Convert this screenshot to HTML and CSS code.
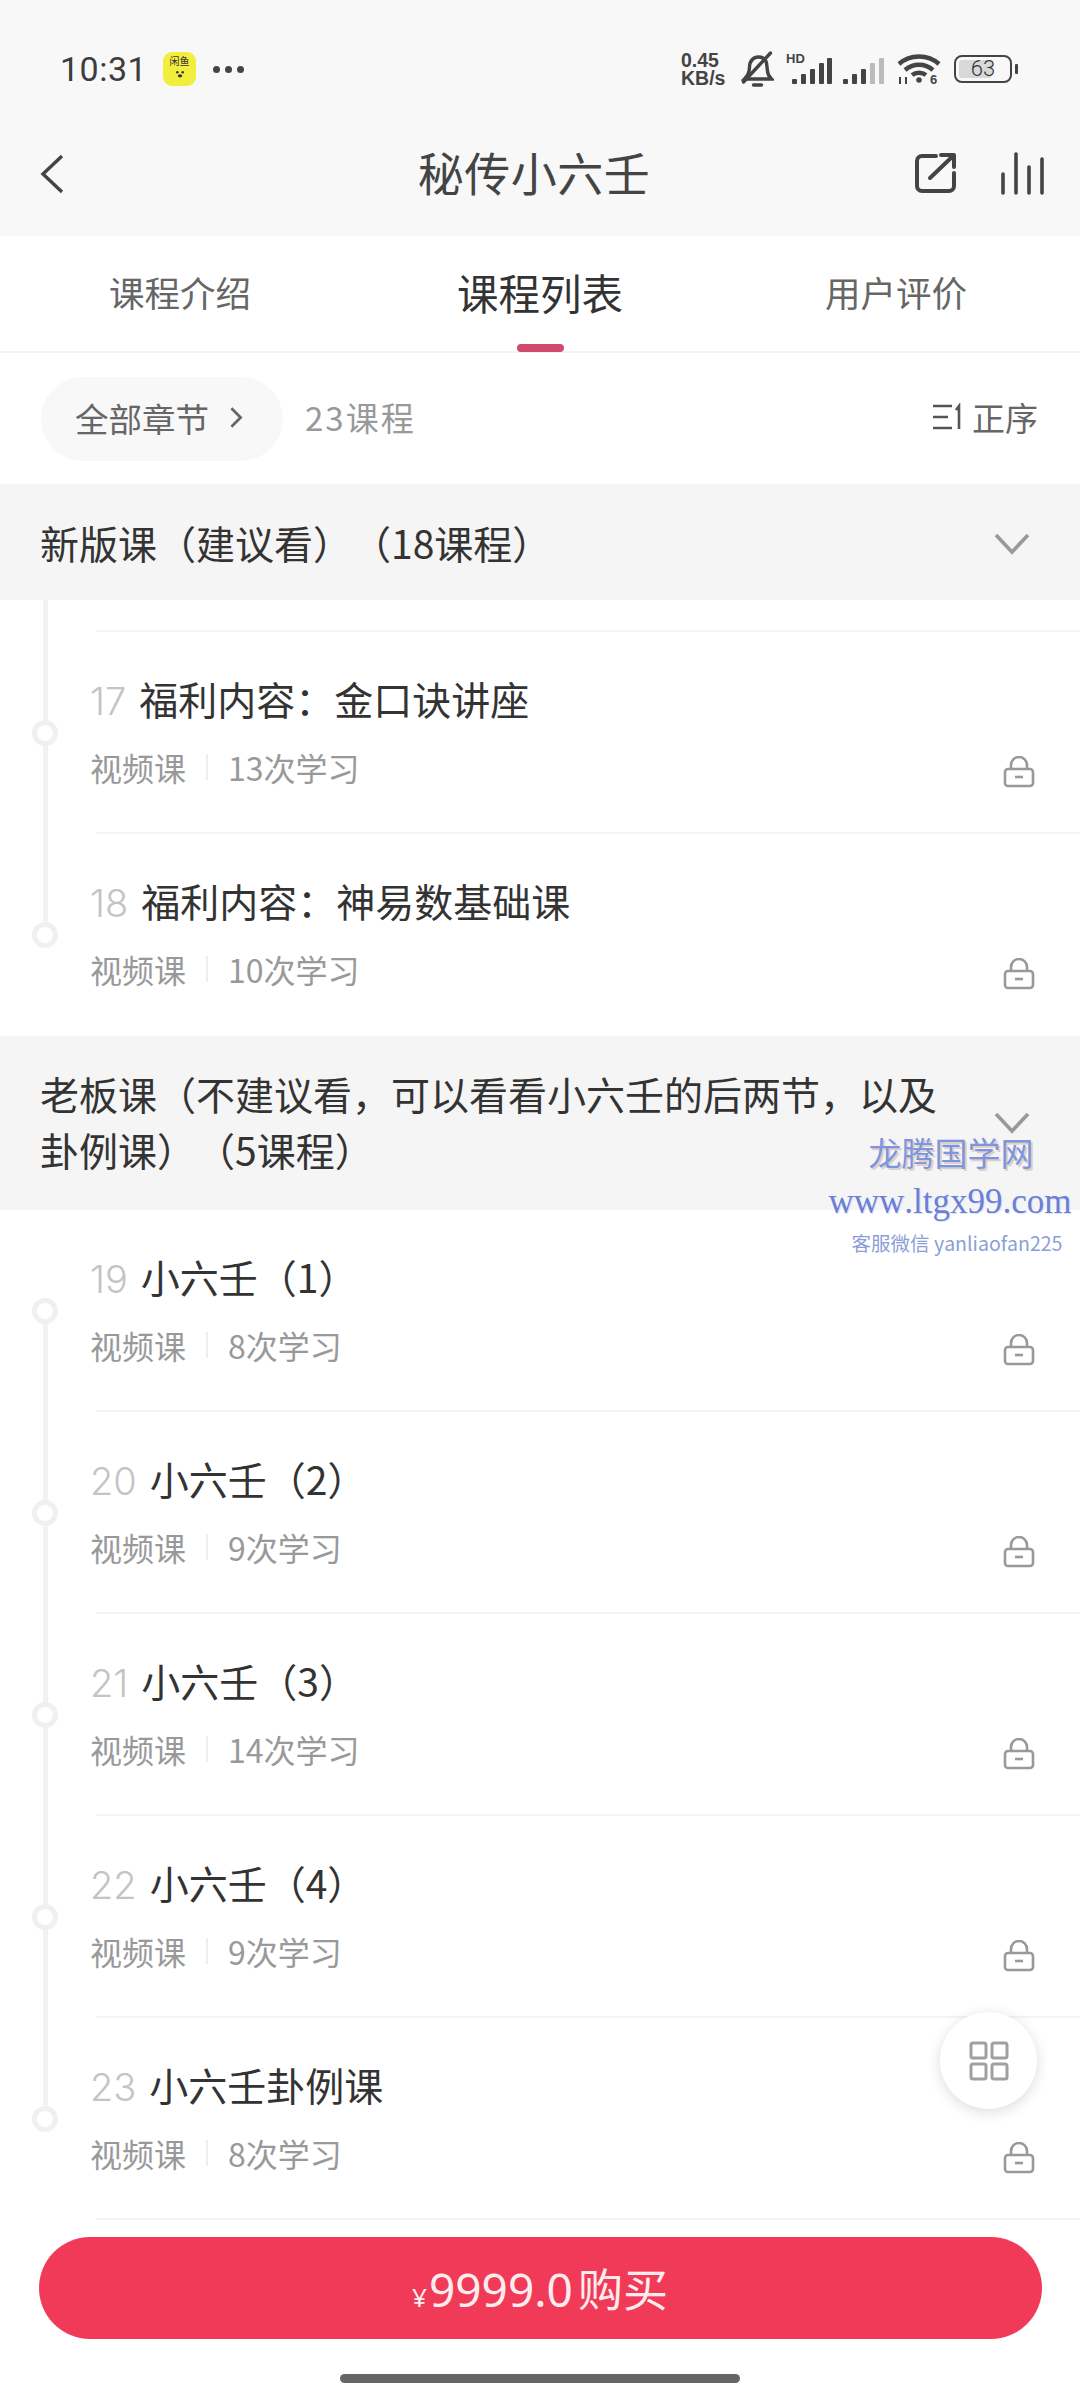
FILE: index.html
```html
<!DOCTYPE html>
<html lang="zh-CN">
<head>
<meta charset="utf-8">
<title>秘传小六壬</title>
<link rel="stylesheet" href="styles.css">
</head>
<body>
<div class="app">
  <header class="top">
    <div class="status">
      <div class="status-left">
        <span class="time">10:31</span>
        <span class="app-badge"><span class="badge-text">闲鱼</span><svg class="badge-face" viewBox="0 0 20 12"><circle cx="7" cy="4" r="1.4" fill="#333"/><circle cx="13" cy="4" r="1.4" fill="#333"/><ellipse cx="10" cy="8" rx="2.4" ry="1.8" fill="#333"/></svg></span>
        <span class="dots"><i></i><i></i><i></i></span>
      </div>
      <div class="status-right">
        <span class="speed"><span>0.45</span><span>KB/s</span></span>
        <svg class="ic-bell" viewBox="0 0 32 36" fill="none" stroke="#444" stroke-width="3.4"><path d="M3 28c3-3 5-6 5-12 0-6 4-10 9-10 4 0 7 2 8 6l1 8c0 3 2 6 4 8z"/><path d="M2 31 29 2" stroke-linecap="round"/><path d="M12 34h8" stroke-linecap="round"/></svg>
        <svg class="ic-sig1" viewBox="0 0 46 32"><text x="0" y="10" class="hd">HD</text><rect x="6" y="26" width="5" height="5" rx="1" fill="#444"/><rect x="15" y="21" width="5" height="10" rx="1" fill="#444"/><rect x="24" y="16" width="5" height="15" rx="1" fill="#444"/><rect x="33" y="10" width="5" height="21" rx="1" fill="#444"/><rect x="41" y="5" width="5" height="26" rx="1" fill="#444"/></svg>
        <svg class="ic-sig2" viewBox="0 0 42 28"><rect x="0" y="22" width="5" height="5" rx="1" fill="#444"/><rect x="9" y="17" width="5" height="10" rx="1" fill="#444"/><rect x="18" y="12" width="5" height="15" rx="1" fill="#444"/><rect x="27" y="6" width="5" height="21" rx="1" fill="#bbb"/><rect x="36" y="1" width="5" height="26" rx="1" fill="#bbb"/></svg>
        <svg class="ic-wifi" viewBox="0 0 44 32" fill="none" stroke="#444" stroke-width="4.4"><path d="M2 11c11-10 29-10 40 0"/><path d="M8 17c8-7 20-7 28 0"/><path d="M15 22c4-3 10-3 14 0"/><circle cx="22" cy="27" r="2.8" fill="#444" stroke="none"/><text x="33" y="31" class="wifi-six">6</text><path d="M3 24v7M9 24v7" stroke-width="2"/></svg>
        <span class="battery"><span class="battery-fill"></span><span class="battery-num">63</span></span><span class="battery-tip"></span>
      </div>
    </div>
    <div class="nav">
      <svg class="ic-back" viewBox="0 0 24 40" fill="none" stroke="#444" stroke-width="3.4"><path d="M22 2 3 20l19 18"/></svg>
      <h1 class="nav-title">秘传小六壬</h1>
      <div class="nav-actions">
        <svg class="ic-share" viewBox="0 0 42 42" fill="none" stroke="#444" stroke-width="4" stroke-linecap="round" stroke-linejoin="round"><path d="M22 4H8a5 5 0 0 0-5 5v25a5 5 0 0 0 5 5h27a5 5 0 0 0 5-5V21"/><path d="M16 26 39 4M27 3h13v12"/></svg>
        <svg class="ic-bars" viewBox="0 0 44 44" fill="none" stroke="#444" stroke-width="3.6" stroke-linecap="round"><path d="M3 23v19M16 3v39M29 16v26M42 8v34"/></svg>
      </div>
    </div>
  </header>

  <nav class="tabs">
    <span class="tab">课程介绍</span>
    <span class="tab tab-active">课程列表</span>
    <span class="tab tab-last">用户评价</span>
  </nav>

  <div class="filter">
    <span class="pill">全部章节<svg class="pill-arrow" viewBox="0 0 12 20" fill="none" stroke="#666" stroke-width="2.4"><path d="m2 2 8 8-8 8"/></svg></span>
    <span class="count">23课程</span>
    <span class="sort"><svg class="ic-sort" viewBox="0 0 30 28" fill="none" stroke="#555" stroke-width="2.6"><path d="M0 3h19M0 14h15M0 25h19M26 26V3l-3 4"/></svg>正序</span>
  </div>

  <section class="section-head">
    <h2 class="section-title">新版课（建议看）（18课程）</h2>
    <svg class="ic-down" viewBox="0 0 36 24" fill="none" stroke="#999" stroke-width="3.6"><path d="m2 3 16 17L34 3"/></svg>
  </section>
  <ul class="lessons">
    <li class="spacer"></li>
    <li class="row mid"><div class="row-title"><span class="idx">17</span>福利内容：金口诀讲座</div><div class="meta"><span>视频课</span><i class="sep"></i><span>13次学习</span><svg class="ic-lock" viewBox="0 0 32 32" fill="none" stroke="#999" stroke-width="2.6"><path d="M8 13V9a8 8 0 0 1 16 0v4"/><rect x="2" y="13" width="28" height="17" rx="3"/><path d="M12 21h8"/></svg></div></li>
    <li class="row end no-line"><div class="row-title"><span class="idx">18</span>福利内容：神易数基础课</div><div class="meta"><span>视频课</span><i class="sep"></i><span>10次学习</span><svg class="ic-lock" viewBox="0 0 32 32" fill="none" stroke="#999" stroke-width="2.6"><path d="M8 13V9a8 8 0 0 1 16 0v4"/><rect x="2" y="13" width="28" height="17" rx="3"/><path d="M12 21h8"/></svg></div></li>
  </ul>

  <section class="section-head section-tall">
    <h2 class="section-title">老板课（不建议看，可以看看小六壬的后两节，以及卦例课）（5课程）</h2>
    <svg class="ic-down" viewBox="0 0 36 24" fill="none" stroke="#999" stroke-width="3.6"><path d="m2 3 16 17L34 3"/></svg>
  </section>
  <ul class="lessons">
    <li class="row start"><div class="row-title"><span class="idx">19</span>小六壬（1）</div><div class="meta"><span>视频课</span><i class="sep"></i><span>8次学习</span><svg class="ic-lock" viewBox="0 0 32 32" fill="none" stroke="#999" stroke-width="2.6"><path d="M8 13V9a8 8 0 0 1 16 0v4"/><rect x="2" y="13" width="28" height="17" rx="3"/><path d="M12 21h8"/></svg></div></li>
    <li class="row mid"><div class="row-title"><span class="idx">20</span>小六壬（2）</div><div class="meta"><span>视频课</span><i class="sep"></i><span>9次学习</span><svg class="ic-lock" viewBox="0 0 32 32" fill="none" stroke="#999" stroke-width="2.6"><path d="M8 13V9a8 8 0 0 1 16 0v4"/><rect x="2" y="13" width="28" height="17" rx="3"/><path d="M12 21h8"/></svg></div></li>
    <li class="row mid"><div class="row-title"><span class="idx">21</span>小六壬（3）</div><div class="meta"><span>视频课</span><i class="sep"></i><span>14次学习</span><svg class="ic-lock" viewBox="0 0 32 32" fill="none" stroke="#999" stroke-width="2.6"><path d="M8 13V9a8 8 0 0 1 16 0v4"/><rect x="2" y="13" width="28" height="17" rx="3"/><path d="M12 21h8"/></svg></div></li>
    <li class="row mid"><div class="row-title"><span class="idx">22</span>小六壬（4）</div><div class="meta"><span>视频课</span><i class="sep"></i><span>9次学习</span><svg class="ic-lock" viewBox="0 0 32 32" fill="none" stroke="#999" stroke-width="2.6"><path d="M8 13V9a8 8 0 0 1 16 0v4"/><rect x="2" y="13" width="28" height="17" rx="3"/><path d="M12 21h8"/></svg></div></li>
    <li class="row end"><div class="row-title"><span class="idx">23</span>小六壬卦例课</div><div class="meta"><span>视频课</span><i class="sep"></i><span>8次学习</span><svg class="ic-lock" viewBox="0 0 32 32" fill="none" stroke="#999" stroke-width="2.6"><path d="M8 13V9a8 8 0 0 1 16 0v4"/><rect x="2" y="13" width="28" height="17" rx="3"/><path d="M12 21h8"/></svg></div></li>
  </ul>

  <footer class="footer">
    <button class="buy"><span class="yen">¥</span>9999.0<span class="buy-label">购买</span></button>
    <div class="home-bar"></div>
  </footer>

  <div class="fab"><svg class="ic-grid" viewBox="0 0 40 40" fill="none" stroke="#a0a0a0" stroke-width="3"><rect x="2" y="2" width="15" height="15" rx="2"/><rect x="23" y="2" width="15" height="15" rx="2"/><rect x="2" y="23" width="15" height="15" rx="2"/><rect x="23" y="23" width="15" height="15" rx="2"/></svg></div>

  <div class="watermark">
    <div class="wm-name">龙腾国学网</div>
    <div class="wm-url">www.ltgx99.com</div>
    <div class="wm-wx">客服微信 yanliaofan225</div>
  </div>
</div>
</body>
</html>
```

FILE: styles.css
```css
* { box-sizing: border-box; margin: 0; padding: 0; }
html, body { width: 1080px; height: 2400px; background: #fff; overflow: hidden; }
body { font-family: "Noto Sans CJK SC", "Noto Sans", sans-serif; color: #333; text-spacing-trim: space-all; font-kerning: none; }
ul { list-style: none; }
.app { position: relative; width: 1080px; height: 2400px; overflow: hidden; background: #fff; display: flex; flex-direction: column; }

.top { height: 236px; background: #f8f8f8; display: flex; flex-direction: column; }
.status { height: 128px; padding: 46px 62px 0 60px; display: flex; justify-content: space-between; align-items: flex-start; }
.status-left { display: flex; align-items: center; height: 46px; }
.time { font-family: Roboto, sans-serif; font-size: 34px; color: #3d3d3d; width: 103px; letter-spacing: .5px; }
.app-badge { width: 33px; height: 34px; border-radius: 9px; background: #f2ee3e; display: flex; flex-direction: column; align-items: center; overflow: hidden; }
.badge-text { font-size: 10px; line-height: 14px; color: #333; margin-top: 2px; }
.badge-face { width: 18px; height: 12px; }
.dots { display: flex; gap: 5px; margin-left: 17px; }
.dots i { width: 7px; height: 7px; border-radius: 50%; background: #444; }
.status-right { display: flex; align-items: center; height: 46px; }
.speed { display: flex; flex-direction: column; font-family: "Liberation Sans", sans-serif; font-weight: 700; font-size: 19.5px; line-height: 18px; color: #444; width: 60px; }
.ic-bell { width: 33px; height: 36px; }
.ic-sig1 { width: 46px; height: 32px; margin-left: 12px; overflow: visible; }
.hd { font: 700 13px "Liberation Sans", sans-serif; fill: #444; }
.ic-sig2 { width: 42px; height: 28px; margin-left: 11px; margin-top: 4px; }
.ic-wifi { width: 44px; height: 32px; margin-left: 12px; overflow: visible; }
.wifi-six { font: 700 13px "Liberation Sans", sans-serif; fill: #444; stroke: none; }
.battery { position: relative; width: 58px; height: 28px; margin-left: 13px; border: 2.5px solid #444; border-radius: 8px; display: flex; align-items: center; justify-content: center; overflow: hidden; }
.battery-fill { position: absolute; left: 3px; top: 3px; bottom: 3px; width: 33px; background: #d8d8d8; border-radius: 3px; }
.battery-num { position: relative; font-family: Roboto, sans-serif; font-weight: 300; font-size: 22px; line-height: 22px; color: #333; }
.battery-tip { width: 3px; height: 10px; margin-left: 3px; background: #444; border-radius: 1px; }

.nav { height: 108px; padding: 0 36px 0 40px; display: grid; grid-template-columns: 1fr auto 1fr; align-items: center; }
.ic-back { width: 24px; height: 40px; margin-top: -16px; justify-self: start; }
.nav-title { font-size: 46px; letter-spacing: .5px; font-weight: 400; color: #444; line-height: 60px; margin: -23px 16px 0 0; }
.nav-actions { display: flex; gap: 44px; align-items: center; margin-top: -18px; justify-self: end; }
.ic-share { width: 42px; height: 42px; }
.ic-bars { width: 44px; height: 44px; }

.tabs { height: 117px; display: grid; grid-template-columns: 360px 360px 360px; align-items: center; border-bottom: 2px solid #f3f3f3; }
.tab { font-size: 35.5px; color: #666; text-align: center; line-height: 112px; position: relative; height: 115px; }
.tab-last { padding-right: 8px; }
.tab-active { font-size: 41.5px; color: #333; }
.tab-active::after { content: ""; position: absolute; left: 157px; bottom: -1px; width: 47px; height: 8px; border-radius: 4px; background: #cf4a6c; }

.filter { height: 131px; display: flex; align-items: center; padding: 0 42px 0 41px; }
.pill { width: 242px; height: 84px; border-radius: 42px; background: #f8f8f8; display: flex; align-items: center; padding: 0 0 3px 34px; font-size: 33.5px; color: #666; }
.pill-arrow { width: 14px; height: 23px; margin-left: 20px; }
.count { margin-left: 22px; padding-bottom: 3px; font-size: 33px; letter-spacing: 2px; color: #999; }
.sort { margin-left: auto; padding-bottom: 3px; display: flex; align-items: center; gap: 9px; font-size: 33px; color: #666; }
.ic-sort { width: 30px; height: 28px; }

.section-head { height: 116px; background: #f5f5f5; display: flex; align-items: center; justify-content: space-between; padding: 0 50px 0 40px; }
.section-tall { height: 174px; }
.section-title { font-size: 39px; font-weight: 400; color: #333; line-height: 57px; width: 920px; }
.section-tall .section-title { line-height: 56px; padding-bottom: 4px; }
.ic-down { width: 36px; height: 24px; flex: none; margin-top: 3px; }
.section-tall .ic-down { margin-top: -1px; }

.spacer { height: 32px; position: relative; }
.spacer::before { content: ""; position: absolute; left: 43px; top: 0; bottom: 0; width: 5px; background: #f2f2f2; }
.spacer::after { content: ""; position: absolute; left: 96px; right: 0; bottom: 0; height: 2px; background: #f3f3f3; }
.row { height: 202px; padding: 37px 45px 0 90px; position: relative; }
.row::before { content: ""; position: absolute; left: 43px; top: 0; bottom: 0; width: 5px; background: #f2f2f2; }
.row.start::before { top: 101px; }
.row.end::before { bottom: 101px; }
.row-title { font-size: 39px; line-height: 58px; color: #333; position: relative; }
.row-title::before { content: ""; position: absolute; left: -58px; top: 51px; width: 16px; height: 16px; border-radius: 50%; background: #fff; border: 5px solid #f0f0f0; }
.idx { font-family: Inter, sans-serif; font-weight: 300; color: #c4c4c4; font-size: 38px; margin-right: 13px; }
.meta { margin-top: 14px; display: flex; align-items: center; font-size: 32px; color: #999; line-height: 46px; }
.sep { width: 2px; height: 26px; background: #eee; margin: 0 20px; }
.ic-lock { width: 32px; height: 32px; margin-left: auto; margin-top: 10px; }
.row::after { content: ""; position: absolute; left: 96px; right: 0; bottom: 0; height: 2px; background: #f3f3f3; }
.row.no-line::after { display: none; }

.footer { padding-top: 17px; display: flex; flex-direction: column; align-items: center; }
.buy { width: 1003px; height: 102px; border: 0; border-radius: 51px; background: #f13a57; color: #fdecee; font-family: "Noto Sans", sans-serif; font-size: 46px; font-weight: 400; display: flex; align-items: baseline; justify-content: center; line-height: 102px; }
.yen { font-size: 26px; margin-right: 2px; }
.buy-label { font-family: "Noto Sans CJK SC", sans-serif; font-size: 45px; margin-left: 5px; }
.home-bar { width: 400px; height: 9px; border-radius: 5px; background: #666; margin-top: 35px; }

.fab { position: absolute; left: 940px; top: 2012px; width: 97px; height: 97px; border-radius: 50%; background: #fff; box-shadow: 0 3px 14px rgba(0, 0, 0, .14); display: flex; align-items: center; justify-content: center; }
.ic-grid { width: 40px; height: 40px; }

.watermark { position: absolute; left: 820px; top: 1129px; width: 260px; text-align: center; pointer-events: none; }
.wm-name { font-size: 33px; line-height: 46px; color: #7d95de; padding-left: 2px; text-shadow: 2px 2px 0 #ddd0c8; }
.wm-url { font-family: "Liberation Serif", serif; font-size: 35px; line-height: 36px; margin-top: 9px; color: #6a7fd6; white-space: nowrap; text-shadow: 1px 1px 0 #dfe3f5; }
.wm-wx { font-size: 19.5px; line-height: 30px; margin-top: 8px; padding-left: 14px; color: #8c9ed8; white-space: nowrap; }
```
